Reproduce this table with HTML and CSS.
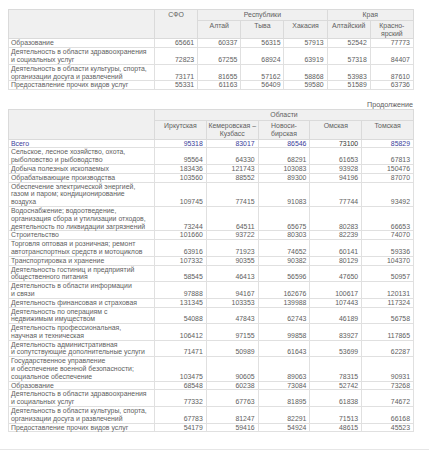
FILE: index.html
```html
<!DOCTYPE html>
<html lang="ru">
<head>
<meta charset="utf-8">
<link rel="stylesheet" href="styles.css">
</head>
<body>
<table class="grid">
<colgroup><col class="c-label"><col class="c6"><col class="c6"><col class="c6"><col class="c6"><col class="c6"><col class="c6"></colgroup>
<thead>
<tr><th rowspan="2"></th><th rowspan="2">СФО</th><th colspan="3">Республики</th><th colspan="2">Края</th></tr>
<tr><th>Алтай</th><th>Тыва</th><th>Хакасия</th><th>Алтайский</th><th>Красно-<br>ярский</th></tr>
</thead>
<tbody>
<tr><td class="lbl">Образование</td><td>65661</td><td>60337</td><td>56315</td><td>57913</td><td>52542</td><td>77773</td></tr>
<tr><td class="lbl">Деятельность в области здравоохранения<br>и социальных услуг</td><td>72823</td><td>67255</td><td>68924</td><td>63919</td><td>57318</td><td>84407</td></tr>
<tr><td class="lbl">Деятельность в области культуры, спорта,<br>организации досуга и развлечений</td><td>73171</td><td>81655</td><td>57162</td><td>58868</td><td>53983</td><td>87610</td></tr>
<tr><td class="lbl">Предоставление прочих видов услуг</td><td>55331</td><td>61163</td><td>56409</td><td>59580</td><td>51589</td><td>63736</td></tr>
</tbody>
</table>

<p class="cont">Продолжение</p>

<table class="grid">
<colgroup><col class="c-label"><col class="c5"><col class="c5"><col class="c5"><col class="c5"><col class="c5"></colgroup>
<thead>
<tr><th rowspan="2"></th><th colspan="5">Области</th></tr>
<tr><th>Иркутская</th><th>Кемеровская –<br>Кузбасс</th><th>Новоси-<br>бирская</th><th>Омская</th><th>Томская</th></tr>
</thead>
<tbody>
<tr class="total"><td class="lbl">Всего</td><td>95318</td><td>83017</td><td>86546</td><td class="dark">73100</td><td>85829</td></tr>
<tr><td class="lbl">Сельское, лесное хозяйство, охота,<br>рыболовство и рыбоводство</td><td>95564</td><td>64330</td><td>68291</td><td>61653</td><td>67813</td></tr>
<tr><td class="lbl">Добыча полезных ископаемых</td><td>183436</td><td>121743</td><td>103083</td><td>93928</td><td>150476</td></tr>
<tr><td class="lbl">Обрабатывающие производства</td><td>103560</td><td>88552</td><td>89300</td><td>94196</td><td>87070</td></tr>
<tr><td class="lbl">Обеспечение электрической энергией,<br>газом и паром; кондиционирование<br>воздуха</td><td>109745</td><td>77415</td><td>91083</td><td>77744</td><td>93492</td></tr>
<tr><td class="lbl">Водоснабжение; водоотведение,<br>организация сбора и утилизации отходов,<br>деятельность по ликвидации загрязнений</td><td>73244</td><td>64511</td><td>65675</td><td>80283</td><td>66653</td></tr>
<tr><td class="lbl">Строительство</td><td>101660</td><td>93722</td><td>80303</td><td>82239</td><td>74070</td></tr>
<tr><td class="lbl">Торговля оптовая и розничная; ремонт<br>автотранспортных средств и мотоциклов</td><td>63916</td><td>71923</td><td>74652</td><td>60141</td><td>59336</td></tr>
<tr><td class="lbl">Транспортировка и хранение</td><td>107332</td><td>90355</td><td>90382</td><td>80129</td><td>104370</td></tr>
<tr><td class="lbl">Деятельность гостиниц и предприятий<br>общественного питания</td><td>58545</td><td>46413</td><td>56596</td><td>47650</td><td>50957</td></tr>
<tr><td class="lbl">Деятельность в области информации<br>и связи</td><td>97888</td><td>94167</td><td>162676</td><td>100617</td><td>120131</td></tr>
<tr><td class="lbl">Деятельность финансовая и страховая</td><td>131345</td><td>103353</td><td>139988</td><td>107443</td><td>117324</td></tr>
<tr><td class="lbl">Деятельность по операциям с<br>недвижимым имуществом</td><td>54088</td><td>47843</td><td>62743</td><td>46189</td><td>56758</td></tr>
<tr><td class="lbl">Деятельность профессиональная,<br>научная и техническая</td><td>106412</td><td>97155</td><td>99858</td><td>83927</td><td>117865</td></tr>
<tr><td class="lbl">Деятельность административная<br>и сопутствующие дополнительные услуги</td><td>71471</td><td>50989</td><td>61643</td><td>53699</td><td>62287</td></tr>
<tr><td class="lbl">Государственное управление<br>и обеспечение военной безопасности;<br>социальное обеспечение</td><td>103475</td><td>90605</td><td>89063</td><td>78315</td><td>90931</td></tr>
<tr><td class="lbl">Образование</td><td>68548</td><td>60238</td><td>73084</td><td>52742</td><td>73268</td></tr>
<tr><td class="lbl">Деятельность в области здравоохранения<br>и социальных услуг</td><td>77332</td><td>67763</td><td>81895</td><td>61838</td><td>74672</td></tr>
<tr><td class="lbl">Деятельность в области культуры, спорта,<br>организации досуга и развлечений</td><td>67783</td><td>81247</td><td>82291</td><td>71513</td><td>66168</td></tr>
<tr><td class="lbl">Предоставление прочих видов услуг</td><td>54179</td><td>59416</td><td>54924</td><td>48615</td><td>45523</td></tr>
</tbody>
</table>
<div class="bottom-bar"></div>
</body>
</html>
```
FILE: styles.css
```css
html, body {
  margin: 0;
  padding: 0;
  background: #ffffff;
}
body {
  padding: 9px 8px 0 8px;
  font-family: "Liberation Sans", Arial, sans-serif;
  font-size: 6.9px;
  color: #5e5e5e;
}
.grid {
  width: 405px;
  table-layout: fixed;
  border-collapse: collapse;
  border: 1px solid #dddddd;
}
.c-label { width: 146px; }
.c6 { width: 43.17px; }
.c5 { width: 51.8px; }
.grid th {
  background: #f0f0f0;
  font-weight: normal;
  color: #5e5e5e;
  line-height: 7.8px;
  padding: 1px 0 1px 0;
  border: 1px solid #dadada;
  vertical-align: top;
  text-align: center;
  white-space: nowrap;
}
.grid td {
  line-height: 7.8px;
  padding: 0 3px 0 2px;
  border: 1px solid #e0e0e0;
  text-align: right;
  vertical-align: bottom;
  white-space: nowrap;
}
.grid td.lbl {
  text-align: left;
  vertical-align: top;
  padding-left: 2px;
}
.total td {
  color: #3a3d9a;
}
.total td.dark {
  color: #333333;
}
.cont {
  margin: 11px 0 0 0;
  width: 405px;
  text-align: right;
  line-height: 8px;
  font-size: 7.2px;
  color: #5e5e5e;
}
.bottom-bar {
  height: 3px;
  margin: 17px -8px 0 -8px;
  background: #e6e6e6;
}
```
